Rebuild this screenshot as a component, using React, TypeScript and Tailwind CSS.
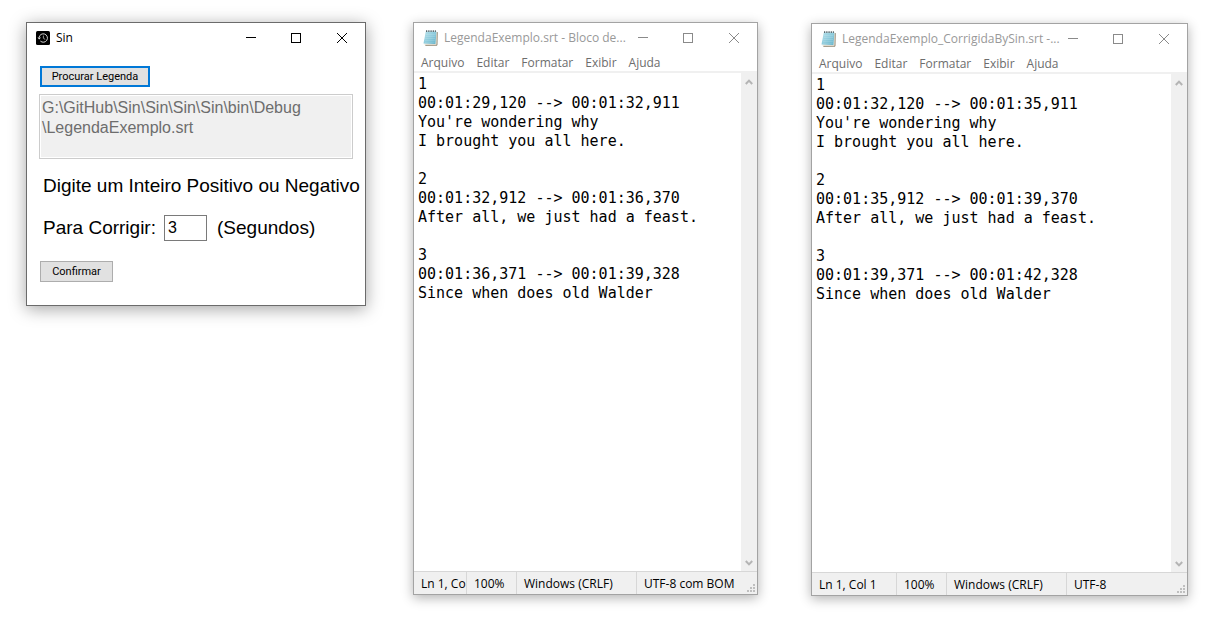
import type { ReactNode } from "react";

const UI_FONT = "font-['Open_Sans','Noto_Sans',sans-serif]";

function ClockIcon() {
  return (
    <svg viewBox="0 0 14 14" className="size-[14px] shrink-0" aria-hidden="true">
      <rect width="14" height="14" rx="1.5" fill="#000" />
      <path d="M3.1 6.4a4.2 4.2 0 1 1 1.3 3.7" fill="none" stroke="#e8e8e8" strokeWidth="0.9" />
      <path d="M1.5 6.4h3.4L3.2 8.5z" fill="#e8e8e8" />
      <path d="M7.4 4.6v2.7l1.8 1.1" fill="none" stroke="#bbb" strokeWidth="0.8" />
    </svg>
  );
}

function NotepadIcon() {
  return (
    <svg viewBox="0 0 16 17" preserveAspectRatio="none" className="h-4 w-[15px] shrink-0" aria-hidden="true">
      <defs>
        <linearGradient id="sheet" x1="0" y1="0" x2="1" y2="1">
          <stop offset="0" stopColor="#b9e2ec" />
          <stop offset="0.5" stopColor="#8dcbdc" />
          <stop offset="1" stopColor="#5fb0c8" />
        </linearGradient>
      </defs>
      <path d="M3 2.2 15 2.2 14.6 15.6 1.4 16z" fill="#f3efe4" />
      <path d="M15.2 2.2 14.9 16.2 2.5 16.3" fill="none" stroke="#7c7158" strokeWidth="0.9" />
      <path d="M3 1.6h11.3l-1 13.4-12.8-.6z" fill="url(#sheet)" />
      <path d="M3.2 5h10M2.9 7h10.2M2.6 9h10.3M2.3 11h10.4M2 13h10.5" stroke="#fff" strokeOpacity="0.3" strokeWidth="0.6" />
      <path d="M3.2 1.2h11.2" stroke="#4f5d62" strokeWidth="1.7" strokeDasharray="1 0.9" />
    </svg>
  );
}

function CaptionButtons({ color }: { color: string }) {
  const button = "flex h-[30px] w-[46px] items-center justify-center";
  return (
    <div className={`flex shrink-0 ${color}`}>
      <button type="button" aria-label="Minimizar" className={button}>
        <svg viewBox="0 0 11 11" className="size-[11px]" fill="none" stroke="currentColor" shapeRendering="crispEdges">
          <path d="M1 4.5h10" />
        </svg>
      </button>
      <button type="button" aria-label="Maximizar" className={button}>
        <svg viewBox="0 0 11 11" className="size-[11px]" fill="none" stroke="currentColor" shapeRendering="crispEdges">
          <path d="M.5.5h9v9h-9z" />
        </svg>
      </button>
      <button type="button" aria-label="Fechar" className={button}>
        <svg viewBox="0 0 11 11" className="size-[11px]" fill="none" stroke="currentColor">
          <path d="M0 0l10 10M10 0L0 10" />
        </svg>
      </button>
    </div>
  );
}

type TitleBarProps = { icon: ReactNode; title: string; color: string; controls: string };

function TitleBar({ icon, title, color, controls }: TitleBarProps) {
  return (
    <header className="flex h-[30px] items-center gap-[6px] pl-[9px]">
      {icon}
      <h1 className={`min-w-0 flex-1 text-xs whitespace-nowrap ${color}`}>{title}</h1>
      <CaptionButtons color={controls} />
    </header>
  );
}

function SinWindow() {
  return (
    <section className={`mt-[22px] min-w-0 grow-[338] basis-0 self-start border border-[#6b6b6b] bg-white shadow-[0_3px_16px_rgba(0,0,0,0.36)] ${UI_FONT}`}>
      <TitleBar icon={<ClockIcon />} title="Sin" color="text-black" controls="text-black" />
      <form className="px-3 pt-[13px] pb-[23px]" onSubmit={(e) => e.preventDefault()}>
        <button type="button" className="ml-px flex h-[21px] w-[110px] items-center justify-center border-2 border-[#0078d7] bg-[#e1e1e1] pt-[2px] font-[Roboto,sans-serif] text-[11px] whitespace-nowrap text-black">
          Procurar Legenda
        </button>
        <textarea
          disabled
          aria-label="Arquivo de legenda"
          className="mt-[7px] block h-[65px] w-full resize-none overflow-hidden border border-[#cccccc] bg-[#f0f0f0] px-[2px] pt-[3px] font-['Liberation_Sans',Arial,sans-serif] text-base leading-5 text-[#6d6d6d] ring-1 ring-white ring-inset"
          defaultValue={"G:\\GitHub\\Sin\\Sin\\Sin\\Sin\\bin\\Debug\n\\LegendaExemplo.srt"}
        />
        <div className="mt-[15px] pl-1 font-['Liberation_Sans',Arial,sans-serif] text-[19px] leading-6 whitespace-nowrap text-black">
          <p>Digite um Inteiro Positivo ou Negativo</p>
          <div className="mt-[17px] flex items-center">
            <label htmlFor="seconds" className="w-[121px]">Para Corrigir:</label>
            <input id="seconds" type="text" defaultValue="3" className="h-[26px] w-[43px] border border-[#7a7a7a] bg-white px-[3px] text-base text-black" />
            <span className="ml-[10px]">(Segundos)</span>
          </div>
        </div>
        <button type="submit" className="mt-5 ml-px flex h-[21px] w-[73px] items-center justify-center border border-[#adadad] bg-[#e1e1e1] pt-[2px] font-[Roboto,sans-serif] text-[11px] text-black">
          Confirmar
        </button>
      </form>
    </section>
  );
}

function Chevron({ d, label }: { d: string; label: string }) {
  return (
    <button type="button" aria-label={label} className="flex h-[17px] w-4 items-center justify-center">
      <svg viewBox="0 0 8 6" className="h-[6px] w-2" fill="none" stroke="#b4b4b4" strokeWidth="2">
        <path d={d} />
      </svg>
    </button>
  );
}

function Grip() {
  const dots = [[6, 0], [3, 3], [6, 3], [0, 6], [3, 6], [6, 6]];
  return (
    <svg viewBox="0 0 8 8" className="mr-[2px] mb-[2px] size-2 shrink-0 self-end" aria-hidden="true">
      {dots.map(([x, y]) => (
        <rect key={`${x}-${y}`} x={x} y={y} width="2" height="2" fill="#bfbfbf" />
      ))}
    </svg>
  );
}

type NotepadProps = { title: string; text: string; position: string; encoding: string; frame: string };

function NotepadWindow({ title, text, position, encoding, frame }: NotepadProps) {
  return (
    <section className={`flex min-w-0 basis-0 flex-col self-start border border-[#a3a3a3] bg-white shadow-[0_3px_11px_rgba(0,0,0,0.3)] ${UI_FONT} ${frame}`}>
      <TitleBar icon={<NotepadIcon />} title={title} color="text-[#999999]" controls="text-[#8a8a8a]" />
      <nav className="flex h-5 items-center gap-3 border-b-2 border-[#f0f0f0] pt-px pl-[7px] text-xs text-[#6d6d6d]">
        {["Arquivo", "Editar", "Formatar", "Exibir", "Ajuda"].map((item) => (
          <button key={item} type="button">{item}</button>
        ))}
      </nav>
      <div className="flex">
        <textarea
          aria-label={title}
          spellCheck={false}
          rows={26}
          defaultValue={text}
          className="block min-w-0 flex-1 resize-none overflow-hidden bg-white pt-[2px] pb-[2px] pl-1 font-['DejaVu_Sans_Mono',monospace] text-[15px] leading-[19px] text-black outline-none"
        />
        <div className="flex w-4 shrink-0 flex-col justify-between bg-[#f0f0f0]">
          <Chevron d="M.8 5 4 1.6 7.2 5" label="Rolar para cima" />
          <Chevron d="M.8 1 4 4.4 7.2 1" label="Rolar para baixo" />
        </div>
      </div>
      <footer className="flex h-[23px] items-center border-t border-[#d7d7d7] bg-[#f0f0f0] text-xs leading-5 whitespace-nowrap text-black">
        <span className="min-w-0 flex-1 pt-[2px] pl-[7px]">{position}</span>
        <span className="w-[50px] border-l border-[#d7d7d7] pt-[2px] pl-[7px]">100%</span>
        <span className="w-[120px] border-l border-[#d7d7d7] pt-[2px] pl-[7px]">Windows (CRLF)</span>
        <span className="w-[111px] border-l border-[#d7d7d7] pt-[2px] pl-[7px]">{encoding}</span>
        <Grip />
      </footer>
    </section>
  );
}

const original = `1
00:01:29,120 --> 00:01:32,911
You're wondering why
I brought you all here.

2
00:01:32,912 --> 00:01:36,370
After all, we just had a feast.

3
00:01:36,371 --> 00:01:39,328
Since when does old Walder`;

const corrected = `1
00:01:32,120 --> 00:01:35,911
You're wondering why
I brought you all here.

2
00:01:35,912 --> 00:01:39,370
After all, we just had a feast.

3
00:01:39,371 --> 00:01:42,328
Since when does old Walder`;

export default function App() {
  return (
    <main className="flex min-h-screen gap-[47px] bg-white pr-7 pl-[26px]">
      <SinWindow />
      <div className="flex min-w-0 grow-[775] basis-0 gap-[53px]">
        <NotepadWindow
          title="LegendaExemplo.srt - Bloco de..."
          text={original}
          position="Ln 1, Co"
          encoding="UTF-8 com BOM"
          frame="mt-[22px] grow-[343]"
        />
        <NotepadWindow
          title="LegendaExemplo_CorrigidaBySin.srt -..."
          text={corrected}
          position="Ln 1, Col 1"
          encoding="UTF-8"
          frame="mt-[23px] grow-[375]"
        />
      </div>
    </main>
  );
}
